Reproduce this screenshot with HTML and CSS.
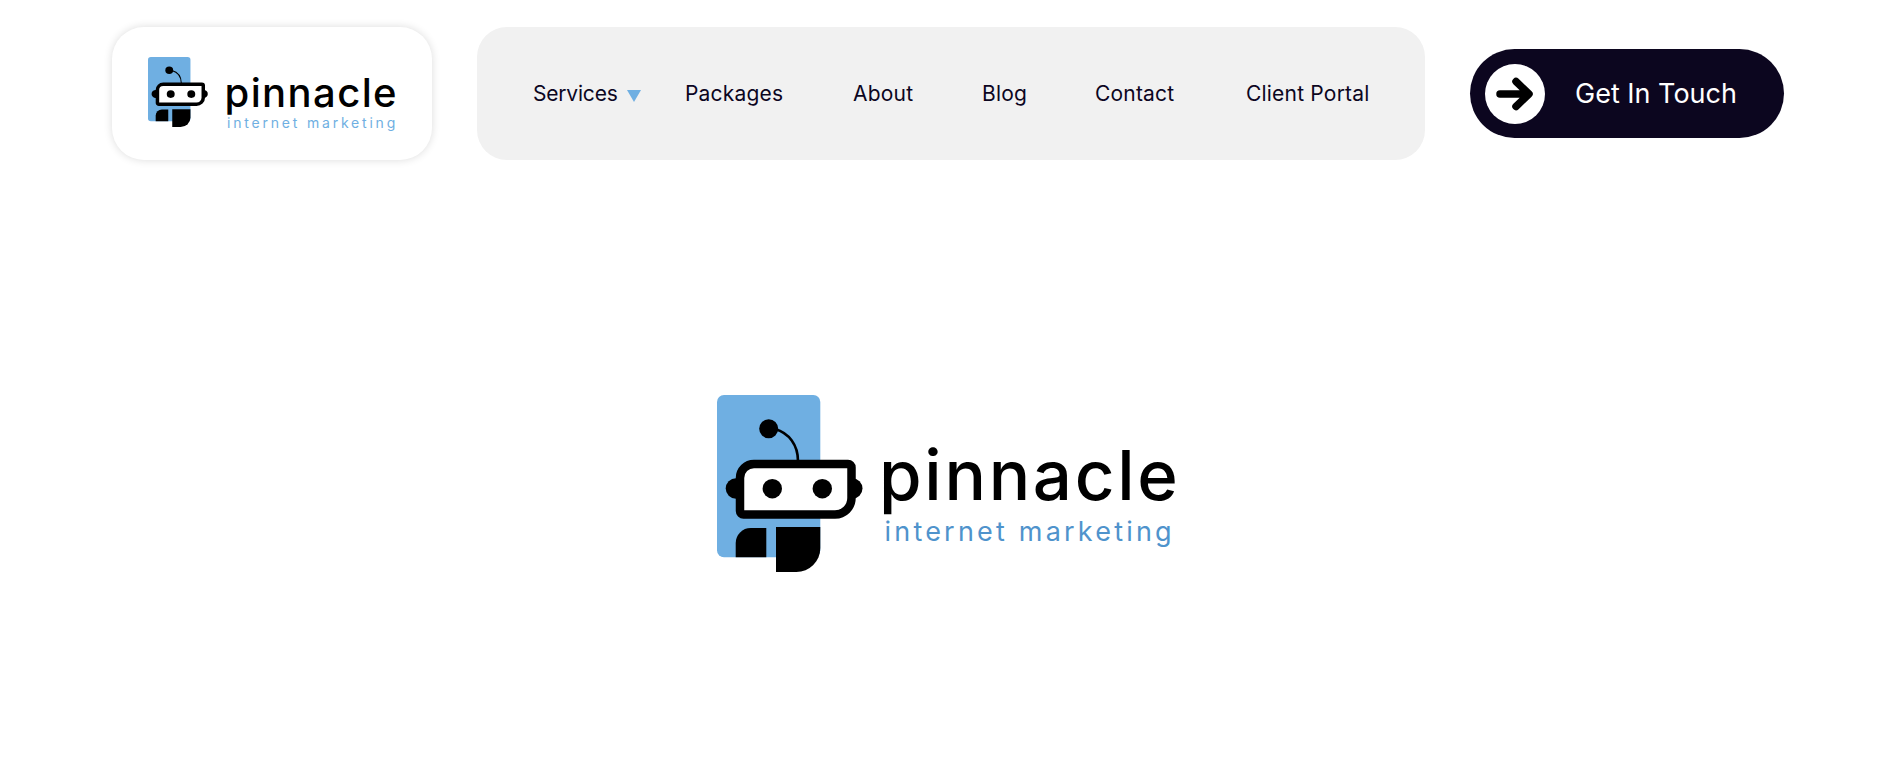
FILE: index.html
```html
<!DOCTYPE html>
<html lang="en">
<head>
  <meta charset="UTF-8" />
  <meta name="viewport" content="width=device-width, initial-scale=1.0"/>
  <title>Pinnacle Internet Marketing</title>
  <link rel="stylesheet" href="styles.css">
</head>
<body>
  <svg class="defs" width="0" height="0">
    <symbol id="robot" viewBox="0 0 146 177" preserveAspectRatio="none">
      <rect width="103.3" height="162.3" rx="7" fill="#6fafe2"/>
      <path d="M18.7 162.3V148a15 15 0 0 1 15-15H49.3V162.3Z"/>
      <path d="M59 132H103.3V153a24 24 0 0 1-24 24H59Z"/>
      <circle cx="51.7" cy="33.7" r="9.5"/>
      <path d="M58 34C72 38 81 50 81 66" fill="none" stroke="#000" stroke-width="2.6"/>
      <circle cx="19" cy="93.5" r="10.3"/>
      <circle cx="135.2" cy="93.5" r="10.3"/>
      <path d="M37 69H131a3.5 3.5 0 0 1 3.5 3.5V103a16.5 16.5 0 0 1-16.5 16.5H26.5a3.5 3.5 0 0 1-3.5-3.5V83a14 14 0 0 1 14-14Z" fill="#fff" stroke="#000" stroke-width="8.5"/>
      <circle cx="55.3" cy="93.7" r="9.7"/>
      <circle cx="105.3" cy="93.7" r="9.7"/>
    </symbol>
  </svg>

  <header class="header">
    <a class="logo-card" href="#">
      <div class="logo logo-small">
        <svg class="logo-mark"><use href="#robot"/></svg>
        <div class="logo-text">
          <div class="logo-name">pinnacle</div>
          <div class="logo-tag">internet marketing</div>
        </div>
      </div>
    </a>

    <nav class="nav">
      <a class="nav-services" href="#">Services <span class="caret"></span></a>
      <a href="#">Packages</a>
      <a href="#">About</a>
      <a href="#">Blog</a>
      <a href="#">Contact</a>
      <a href="#">Client Portal</a>
    </nav>

    <a class="cta" href="#">
      <span class="cta-icon">
        <svg width="60" height="60" viewBox="0 0 60 60">
          <path d="M15 30H43M31 17.5L44 30L31 42.5" fill="none" stroke="#000" stroke-width="7.5" stroke-linecap="round" stroke-linejoin="round"/>
        </svg>
      </span>
      Get In Touch
    </a>
  </header>

  <main class="main">
    <div class="logo logo-large">
      <svg class="logo-mark"><use href="#robot"/></svg>
      <div class="logo-text">
        <div class="logo-name">pinnacle</div>
        <div class="logo-tag">internet marketing</div>
      </div>
    </div>
  </main>
</body>
</html>
```

FILE: styles.css
```css
* {
  box-sizing: border-box;
}

body {
  margin: 0;
  background: #fff;
  color: #0c061f;
  font-family: Inter, sans-serif;
  overflow: hidden;
}

a {
  color: inherit;
  text-decoration: none;
}

.defs {
  position: absolute;
}

.header {
  display: flex;
  align-items: center;
  gap: 45px;
  padding: 27px 98px 0 112px;
}

.logo-card {
  width: 320px;
  height: 133px;
  padding: 30px 0 0 36px;
  background: #fff;
  border-radius: 32px;
  box-shadow: 0 0 8px rgba(0,0,0,0.14);
}

.nav {
  display: grid;
  grid-template-columns: 152px 168px 129px 113px 151px auto;
  align-items: center;
  width: 948px;
  height: 133px;
  padding-left: 56px;
  background: #f1f1f1;
  border-radius: 30px;
  font-size: 21px;
  letter-spacing: 0.2px;
  white-space: nowrap;
}

.nav-services {
  display: flex;
  align-items: center;
  gap: 9px;
  letter-spacing: -0.2px;
}

.caret {
  margin-top: 4px;
  border-left: 7px solid transparent;
  border-right: 7px solid transparent;
  border-top: 12px solid #6fafe2;
}

.cta {
  display: flex;
  align-items: center;
  gap: 30px;
  width: 314px;
  height: 89px;
  padding-left: 15px;
  background: #0c061f;
  border-radius: 45px;
  color: #fff;
  font-size: 27px;
}

.cta-icon {
  display: flex;
  width: 60px;
  height: 60px;
  background: #fff;
  border-radius: 50%;
}

.main {
  display: flex;
  justify-content: center;
  padding: 235px 0 0 10px;
}

.logo {
  display: flex;
  white-space: nowrap;
}

.logo-mark {
  display: block;
  flex: none;
}

.logo-name {
  color: #000;
  font-weight: 500;
}

.logo-large .logo-mark {
  width: 146px;
  height: 177px;
}

.logo-large .logo-text {
  width: 296px;
  margin-left: 16px;
  padding-top: 44px;
}

.logo-large .logo-name {
  font-size: 69px;
  line-height: 73px;
  letter-spacing: 2.7px;
}

.logo-large .logo-tag {
  margin: 5px 0 0 5.5px;
  font-size: 27px;
  line-height: 29px;
  letter-spacing: 3.2px;
  color: #4f93cc;
}

.logo-small .logo-mark {
  width: 60px;
  height: 70px;
}

.logo-small .logo-text {
  margin-left: 16.5px;
  padding-top: 15px;
}

.logo-small .logo-name {
  font-size: 40px;
  line-height: 42px;
  letter-spacing: 1.4px;
}

.logo-small .logo-tag {
  margin: 0 0 0 2.5px;
  font-size: 14px;
  line-height: 17px;
  letter-spacing: 2.8px;
  color: #6fafe2;
}
```
